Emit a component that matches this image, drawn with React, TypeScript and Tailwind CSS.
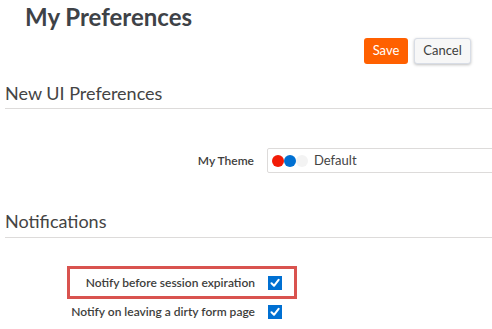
import React from "react";

function Check() {
  return (
    <span className="flex h-[14px] w-[14px] items-center justify-center bg-[#0070d2]">
      <svg width="10" height="10" viewBox="0 0 10 10">
        <path d="M1.5 5.3 L4 7.8 L8.6 1.8" fill="none" stroke="#fff" strokeWidth="2" strokeLinecap="round" strokeLinejoin="round" />
      </svg>
    </span>
  );
}

export default function App() {
  return (
    <div className="h-[329px] w-[492px] overflow-hidden bg-white pl-[5px] font-['Lato','Open_Sans',sans-serif] text-[#3e3e3c]">
      <h1 className="pl-[20px] pt-[3px] text-[24px] font-bold leading-[28px] text-[#3e4247]">My Preferences</h1>

      <div className="mt-[7px] flex justify-end gap-[6px] pr-[21px]">
        <button className="h-[26px] w-[44px] rounded-[3px] bg-[#ff6000] text-[13px] text-white">Save</button>
        <button className="h-[26px] w-[57px] rounded-[3px] border border-[#d8dde6] bg-[#f7f7f7] text-[13px] text-[#3e3e3c] shadow-[0_1px_3px_rgba(0,0,0,0.25)]">
          Cancel
        </button>
      </div>

      {/* New UI section */}
      <div className="mt-[17px] border-b border-[#dddbda] pb-[3px] text-[18px] leading-[24px] text-[#444]">New UI Preferences</div>

      <div className="mt-[39px] flex items-center">
        <div className="w-[249px] text-right text-[12px] font-semibold text-[#3e3e3c]">My Theme</div>
        <div className="ml-[13px] -mr-[10px] flex h-[25px] flex-1 items-center rounded-[2px] border border-[#dddbda] pl-[4px]">
          <span className="h-[12px] w-[12px] rounded-full bg-[#f21b06]" />
          <span className="h-[12px] w-[12px] rounded-full bg-[#0070d2]" />
          <span className="h-[12px] w-[12px] rounded-full bg-[#f3f3f3]" />
          <span className="ml-[6px] text-[13px] text-[#444]">Default</span>
        </div>
      </div>

      {/* Notifications */}
      <div className="mt-[36px] border-b border-[#dddbda] pb-[4px] text-[18px] leading-[24px] text-[#444]">Notifications</div>

      <div className="mt-[31px] flex flex-col gap-[1px] text-[12px] font-semibold text-[#3e3e3c]">
        <div className="relative flex h-[28px] items-center">
          <div className="w-[250px] text-right">Notify before session expiration</div>
          <div className="ml-[13px]"><Check /></div>
          <div className="absolute left-[62px] top-[-3px] h-[33px] w-[230px] border-[3px] border-[#d9534f]" />
        </div>
        <div className="flex h-[28px] items-center">
          <div className="w-[250px] text-right">Notify on leaving a dirty form page</div>
          <div className="ml-[13px]"><Check /></div>
        </div>
      </div>
    </div>
  );
}
